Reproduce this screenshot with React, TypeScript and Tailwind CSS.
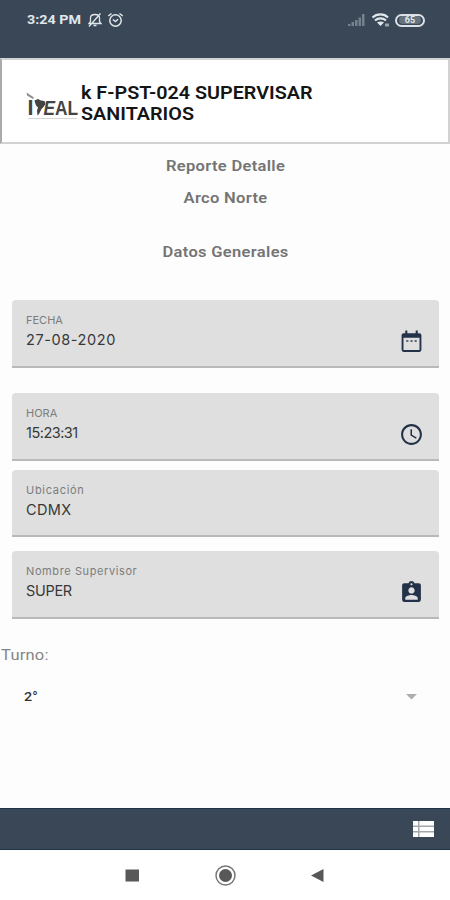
import React from 'react';
import { MdAssignmentInd, MdOutlineAccessTime } from 'react-icons/md';

interface FieldProps {
  label: string;
  value: string;
  className: string;
  labelClass: string;
  valueClass: string;
  icon?: React.ReactNode;
}

const CalendarIcon = () => (
  <svg className="w-[25px] h-[25px]" viewBox="0 0 24 24" fill="currentColor">
    <path d="M19.500 4H18V1.500h-2V4H8V1.500H6V4H4.500C3.400 4 2.500 4.900 2.500 6v14c0 1.100.9 2 2 2h15c1.100 0 2-.9 2-2V6c0-1.100-.9-2-2-2zM19.700 20.200H4.300V8.500h15.400V20.200z" />
    <path d="M7 10.500h2v2H7zM11 10.500h2v2h-2zM15 10.500h2v2h-2z" opacity="0.7" />
  </svg>
);

const Field: React.FC<FieldProps> = ({ label, value, className, labelClass, valueClass, icon }) => (
  <div className={`mx-3 w-[427px] flex justify-between rounded-t bg-[#dfdfdf] border-b-2 border-[#b9b9b9] pl-[14px] pr-[15px] pt-3 font-['Inter',sans-serif] ${className}`}>
    <div className="whitespace-nowrap">
      <div className={`text-[11px] leading-4 text-[#7c7c7c] ${labelClass}`}>{label}</div>
      <div className={`text-[14.5px] leading-6 text-[#383838] ${valueClass}`}>{value}</div>
    </div>
    {icon && <div className="pt-[17px] text-[#233248]">{icon}</div>}
  </div>
);

const StatusBar = () => (
  <header className="h-[58px] shrink-0 bg-[#394757] flex items-start justify-between pl-[27px] pr-[25px] pt-[10px] text-[#e0e7eb]">
    <div className="flex items-center h-5">
      <span className="w-[55px] text-[13px] leading-5 font-bold whitespace-nowrap origin-left scale-x-110">3:24 PM</span>
      <svg className="ml-[5px] w-4 h-4" viewBox="0 0 16 16" fill="none" stroke="currentColor" strokeWidth="1.300">
        <path d="M2 11.500h12L12.500 9.500V6C12.500 3.800 10.500 2.500 8 2.500S3.500 3.800 3.500 6v3.500L2 11.500zM6.500 13.500h3M2 14.500L13.500 1.500" />
      </svg>
      <svg className="ml-[4px] w-[17px] h-4" viewBox="0 0 17 16" fill="none" stroke="currentColor" strokeWidth="1.500">
        <circle cx="8.500" cy="8.500" r="5.700" />
        <path d="M1.200 4L4.500 1.500M15.800 4L12.500 1.500M5.800 7.500L8.500 9.500L11 7.300" />
      </svg>
    </div>
    <div className="flex items-center h-5">
      <svg className="w-[17px] h-3" viewBox="0 0 17 12" fill="#75818c">
        <path d="M0 10h2.500v2H0zM3.500 8H6v4H3.500zM7 6h2.500v6H7zM10.500 3.500H13V12h-2.500zM14 0h2.500v12H14z" />
      </svg>
      <svg className="ml-[6px] w-[19px] h-[14px]" viewBox="0 0 19 14" fill="none" stroke="currentColor" strokeWidth="2.200">
        <path d="M1.500 4.500C6 .3 13 .3 17 4.500M4 7.500c3-2.800 8-2.800 11 0" />
        <path d="M6 9.500c2-1.500 5-1.500 7 0L9.500 13z" fill="currentColor" stroke="none" />
        <path d="M14 10.500h4v3h-4z" fill="#9ba6af" stroke="none" />
      </svg>
      <div className="ml-[5px] w-[30px] h-[13px] rounded-full border-2 border-[#dbe1e6] flex items-center justify-center">
        <div className="w-[22px] h-2 rounded-full bg-[#66727e] text-[9px] leading-2 font-bold text-center">65</div>
      </div>
    </div>
  </header>
);

const Logo = () => (
  <svg className="w-[54px] h-[30px] shrink-0 overflow-visible" viewBox="0 0 54 30" fill="#444444">
    <path d="M.5 2.500L8 7.500L7 9L1 5.500z" opacity="0.6" />
    <text x="1.500" y="25" fontFamily="Liberation Sans, sans-serif" fontWeight="700" fontSize="22" textLength="6" lengthAdjust="spacingAndGlyphs">I</text>
    <path d="M8.500 10.500l3.500-1.500 3 1.500 3.500.5 1 3-2 3-2 2-2.500 5-1.500 1.500-.5-5 1-3-2-2-1-3z" />
    <text x="17.500" y="25" fontFamily="Liberation Sans, sans-serif" fontWeight="700" fontSize="20" textLength="34.500" lengthAdjust="spacingAndGlyphs"><tspan fontStyle="italic">E</tspan>AL</text>
    <path d="M2 28h49v1H2z" fill="#d5d5d5" />
  </svg>
);

export default function App() {
  return (
    <div className="w-[450px] h-[900px] flex flex-col overflow-hidden bg-[#fdfdfd] font-['Roboto',sans-serif]">
      <StatusBar />

      <div className="h-[86px] shrink-0 flex items-start bg-white border-2 border-[#d2d2d2] border-l-[#aaaaaa] pl-6 pt-[22px]">
        <div className="pt-2">
          <Logo />
        </div>
        <h1 className="ml-px text-[18px] leading-[21px] font-semibold text-[#151515] whitespace-nowrap origin-left scale-x-[1.098]">
          k F-PST-024 SUPERVISAR
          <br />
          SANITARIOS
        </h1>
      </div>

      {/* Report titles */}
      <div className="h-[156px] shrink-0 pt-[10px] pl-px text-center text-[15px] leading-6 font-semibold text-[#747474] tracking-[0.3px] scale-x-110">
        <div>Reporte Detalle</div>
        <div className="mt-2">Arco Norte</div>
        <div className="mt-[30px]">Datos Generales</div>
      </div>

      <Field label="FECHA" value="27-08-2020" className="h-[68px]" labelClass="" valueClass="tracking-[0.6px]" icon={<CalendarIcon />} />
      <Field label="HORA" value="15:23:31" className="h-[68px] mt-[25px]" labelClass="" valueClass="tracking-[-0.5px]" icon={<MdOutlineAccessTime size={25} />} />
      <Field label="Ubicación" value="CDMX" className="h-[67px] mt-[9px]" labelClass="tracking-[0.7px]" valueClass="tracking-[0.4px]" />
      <Field label="Nombre Supervisor" value="SUPER" className="h-[68px] mt-[14px]" labelClass="tracking-[0.6px]" valueClass="tracking-[-0.3px]" icon={<MdAssignmentInd size={25} />} />

      {/* Shift selector */}
      <div className="grow">
        <div className="pt-6 pl-px text-[15px] leading-6 text-[#858585] tracking-[0.2px] origin-left scale-x-110">Turno:</div>
        <div className="mt-[18px] h-6 pl-6 pr-[33px] flex items-center justify-between">
          <span className="text-[13px] font-medium text-[#333333] origin-left scale-x-110">2°</span>
          <svg className="w-[11px] h-[6px]" viewBox="0 0 11 6" fill="#adadad">
            <path d="M0 0h11L5.500 5.500z" />
          </svg>
        </div>
      </div>

      <footer className="h-[42px] shrink-0 bg-[#394757] border-y border-[#1f3448] flex items-center justify-end pr-4">
        <svg className="w-[21px] h-4" viewBox="0 0 21 16">
          <path d="M0 0h21v16H0z" fill="#ffffff" />
          <path d="M5 0h1.500v16H5zM0 4.500h21v1.500H0zM0 10h21v1.500H0z" fill="#a3a8ad" />
        </svg>
      </footer>

      <nav className="h-[50px] shrink-0 bg-white">
        <svg className="w-full h-full" viewBox="0 0 450 50" fill="#585858">
          <path d="M125.500 19.500h13.500v12h-13.500zM323.500 19v13L311 25.500z" />
          <circle cx="225.500" cy="25.500" r="9.500" fill="none" stroke="#777777" strokeWidth="1.500" />
          <circle cx="225.500" cy="25.500" r="6.500" />
        </svg>
      </nav>
    </div>
  );
}
